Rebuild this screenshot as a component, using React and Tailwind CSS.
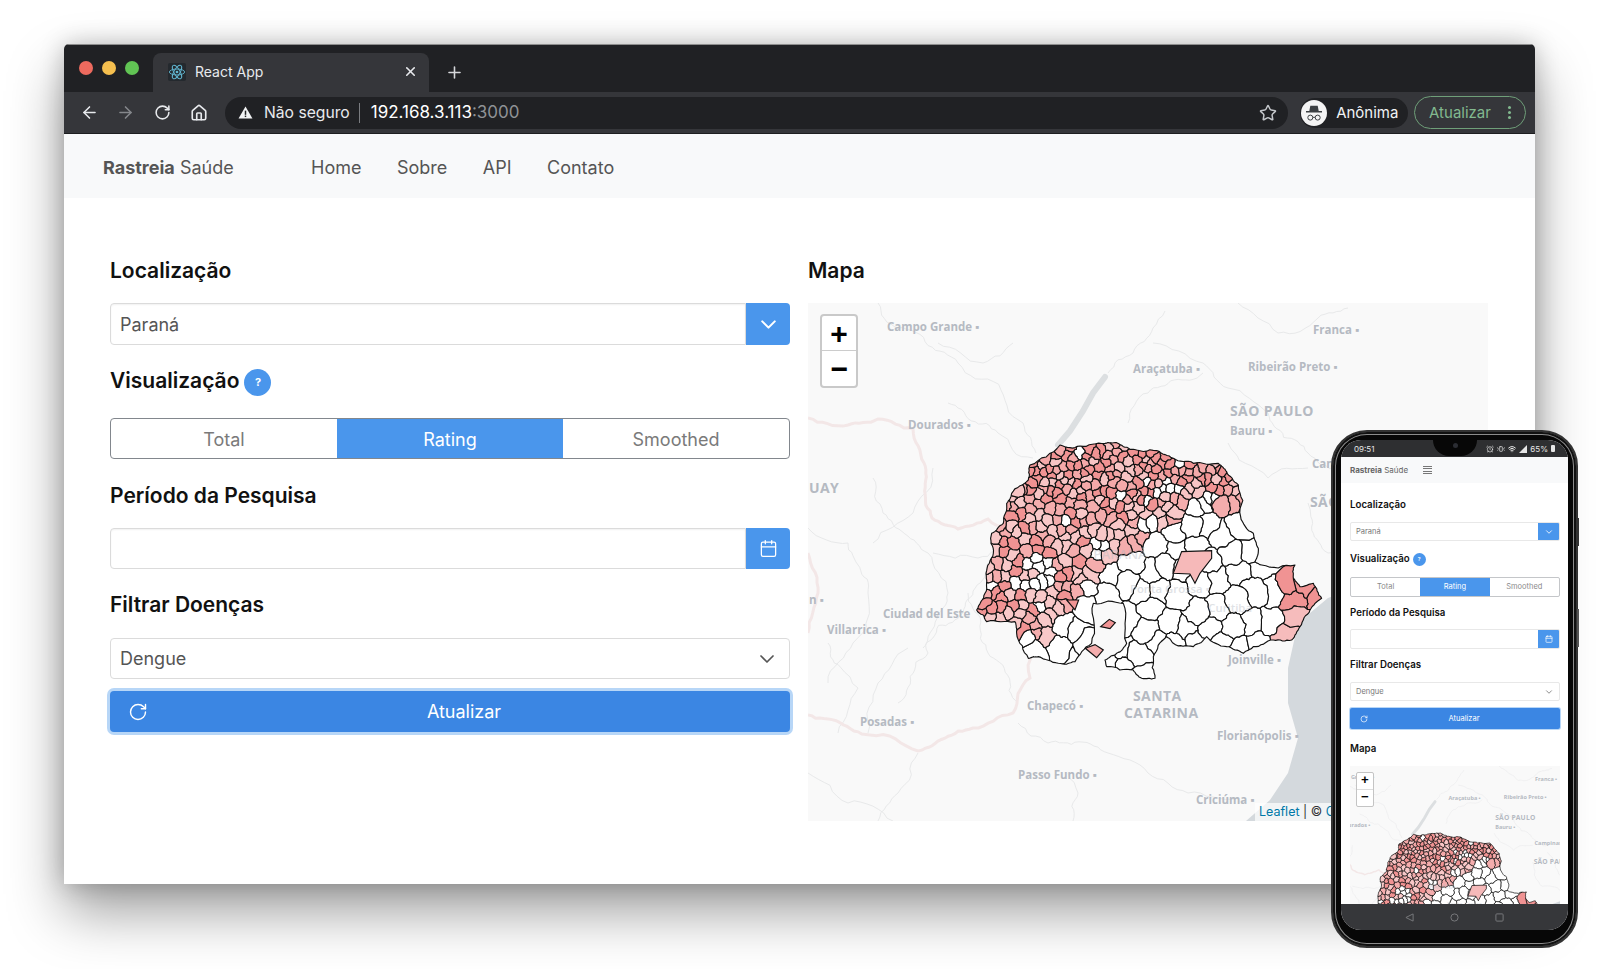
import React from 'react';
import { ArrowLeft, ArrowRight, RotateCw, Home, Star, X, Plus, ChevronDown, Calendar, AlarmClock, Vibrate, Wifi } from 'lucide-react';

// Outline of the state, in px of a 3x crop of the picture (the map group scales it down)
const OUTLINE = [
  [300,45],[360,48],[435,40],[470,38],[510,58],[590,62],[640,85],[700,100],[775,100],[800,125],[835,165],[842,260],
  [880,310],[895,355],[885,395],[905,405],[1005,405],[1000,445],[1020,470],[1060,460],[1085,505],[1050,540],[1020,590],
  [995,630],[940,630],[880,650],[850,670],[800,650],[740,620],[700,650],[640,640],[620,620],[580,680],[585,745],[545,745],
  [520,720],[440,710],[435,690],[470,670],[500,640],[490,520],[400,520],[395,640],[345,695],[295,700],[235,680],[205,685],
  [170,610],[165,575],[80,575],[50,540],[75,490],[78,430],[100,370],[95,310],[130,280],[140,220],[155,190],[205,150],[210,105],
];

const rand = (() => {
  let a = 20240611;
  return () => {
    a = (a + 0x6d2b79f5) | 0;
    let t = Math.imul(a ^ (a >>> 15), 1 | a);
    t = (t + Math.imul(t ^ (t >>> 7), 61 | t)) ^ t;
    return ((t ^ (t >>> 14)) >>> 0) / 4294967296;
  };
})();

const inside = (x, y) => {
  let hit = false;
  for (let i = 0, j = OUTLINE.length - 1; i < OUTLINE.length; j = i++) {
    const [xi, yi] = OUTLINE[i], [xj, yj] = OUTLINE[j];
    if ((yi > y) !== (yj > y) && x < ((xj - xi) * (y - yi)) / (yj - yi) + xi) hit = !hit;
  }
  return hit;
};

// Where the municipalities get pink (north and west)
const pinkLimit = (x) => {
  if (x < 250) return 620;
  if (x < 420) return 620 - ((x - 250) / 170) * 230;
  if (x < 560) return 390 - ((x - 420) / 140) * 70;
  if (x < 640) return 290;
  if (x < 860) return 215;
  return 0;
};

const spacing = (x, y) => {
  if (y < 220) return 15;
  if (y < pinkLimit(x)) return 19;
  return 44;
};

const seeds = [];
for (let i = 0; i < 4200; i++) {
  const x = 40 + rand() * 1060, y = 30 + rand() * 720;
  if (!inside(x, y)) continue;
  const r = spacing(x, y);
  if (seeds.every(s => Math.hypot(s[0] - x, (s[1] - y) * 0.8) > r)) seeds.push([x, y]);
}

const clipHalf = (poly, a, b) => {
  const mx = (a[0] + b[0]) / 2, my = (a[1] + b[1]) / 2, nx = b[0] - a[0], ny = b[1] - a[1];
  const side = p => (p[0] - mx) * nx + (p[1] - my) * ny;
  const out = [];
  poly.forEach((p, i) => {
    const q = poly[(i + 1) % poly.length], sp = side(p), sq = side(q);
    if (sp <= 0) out.push(p);
    if (sp < 0 !== sq < 0) {
      const t = sp / (sp - sq);
      out.push([p[0] + (q[0] - p[0]) * t, p[1] + (q[1] - p[1]) * t]);
    }
  });
  return out;
};

// Same bend for both cells sharing an edge, so borders look hand traced
const bend = (a, b, depth, amount = 0.4) => {
  if (depth === 0 || Math.hypot(a[0] - b[0], a[1] - b[1]) < 7) return [];
  const ka = `${Math.round(a[0])},${Math.round(a[1])}`, kb = `${Math.round(b[0])},${Math.round(b[1])}`;
  const key = ka < kb ? ka + kb : kb + ka;
  let h = 7;
  for (let i = 0; i < key.length; i++) h = (h * 31 + key.charCodeAt(i)) % 65521;
  const k = ((h / 65521) - 0.5) * amount * (ka < kb ? 1 : -1);
  const m = [(a[0] + b[0]) / 2 - (b[1] - a[1]) * k, (a[1] + b[1]) / 2 + (b[0] - a[0]) * k];
  return [...bend(a, m, depth - 1, amount), m, ...bend(m, b, depth - 1, amount)];
};

const toPath = (pts) => 'M' + pts.map(p => `${p[0].toFixed(1)} ${p[1].toFixed(1)}`).join('L') + 'Z';

const cellFill = (x, y, r) => {
  if (x > 915 && y > 395 && y < 450) return '#f09393';
  if (x > 950 && y > 455) return r < 0.5 ? '#f09393' : '#f6bcbc';
  if (y >= pinkLimit(x)) return '#ffffff';
  if (((x - 230) / 50) ** 2 + ((y - 450) / 80) ** 2 < 1 && r < 0.7) return '#ffffff';
  if (((x - 420) / 30) ** 2 + ((y - 345) / 30) ** 2 < 1) return '#ffffff';
  if (x > 540 && y > 150 && r < 0.3) return '#ffffff';
  if (r < 0.03) return '#ffffff';
  if (y < 200) return r < 0.5 ? '#f09393' : r < 0.78 ? '#f4a9a9' : '#f7c4c4';
  return r < 0.34 ? '#f09393' : r < 0.62 ? '#f4adad' : '#f8c8c8';
};

const cells = seeds.map((s) => {
  let poly = [[0, 0], [1110, 0], [1110, 780], [0, 780]];
  seeds.forEach((o) => {
    if (o !== s && Math.hypot(o[0] - s[0], o[1] - s[1]) < 240) poly = clipHalf(poly, s, o);
  });
  const wavy = [];
  poly.forEach((p, i) => wavy.push(p, ...bend(p, poly[(i + 1) % poly.length], 3)));
  return { d: toPath(wavy), fill: cellFill(s[0], s[1], rand()) };
});

const EXTRA = [
  { d: 'M640 430L665 365L755 362L755 385L720 430L705 460L690 432Z', fill: '#f6b9b9' },
  { d: 'M422 590L448 568L466 578L450 596Z', fill: '#f09393' },
  { d: 'M376 655L405 644L430 660L410 683Z', fill: '#f4adad' },
  { d: 'M320 510L356 510L345 540Z', fill: '#f09393' },
];

const outlineWavy = [];
OUTLINE.forEach((p, i) => outlineWavy.push(p, ...bend(p, OUTLINE[(i + 1) % OUTLINE.length], 3, 0.22)));
const outlinePath = toPath(outlineWavy);

const LABELS = [
  ['Campo Grande ▪', 79, 28], ['Araçatuba ▪', 325, 70], ['Ribeirão Preto ▪', 440, 68], ['Franca ▪', 505, 31],
  ['Bauru ▪', 422, 132], ['Dourados ▪', 100, 126], ['n ▪', 1, 301], ['Ciudad del Este', 75, 315], ['Villarrica ▪', 19, 331],
  ['Chapecó ▪', 219, 407], ['Posadas ▪', 52, 423], ['Florianópolis ▪', 409, 437], ['Passo Fundo ▪', 210, 476],
  ['Criciúma ▪', 388, 501], ['Joinville ▪', 420, 361], ['Campinas', 504, 165],
];

const BIG_LABELS = [['SÃO PAULO', 422, 113], ['UAY', 1, 190], ['SÃO PAULO', 502, 204], ['SANTA', 325, 398], ['CATARINA', 316, 415]];

const line = (pts, amount = 0.3) => {
  const out = [];
  pts.forEach((p, i) => {
    out.push(p);
    if (i < pts.length - 1) out.push(...bend(p, pts[i + 1], 4, amount));
  });
  return 'M' + out.map(p => `${p[0].toFixed(1)} ${p[1].toFixed(1)}`).join('L');
};

const GRAY_LINES = [
  [[300,70],[325,50],[345,25],[357,8]], [[70,0],[90,25],[150,60],[215,120],[228,150]], [[345,40],[395,60],[420,85],[460,110],[500,150],[530,165]],
  [[430,0],[450,15],[470,30],[510,15],[540,5]], [[0,225],[40,240],[60,290],[45,340],[20,380]], [[65,175],[75,210],[120,250],[140,290],[120,350],[90,400]],
  [[125,250],[170,255],[205,240],[260,265]], [[160,290],[180,350],[210,400]], [[60,430],[70,380],[100,345]], [[0,470],[40,500],[85,518]],
  [[210,420],[240,440],[300,450],[340,470],[380,490],[430,495]], [[110,450],[90,490],[70,518]], [[260,470],[270,490],[265,518]], [[530,180],[560,230],[600,240],[640,230]],
  [[500,200],[520,250],[560,260],[600,255]], [[140,100],[190,130],[225,155]], [[125,165],[105,210],[65,240]], [[180,260],[155,310],[115,345]],
  [[130,40],[175,60],[205,40]], [[20,340],[50,385],[30,430]], [[320,120],[340,90],[395,70]], [[420,140],[460,175],[500,165]],
].map(p => line(p));

const PINK_LINES = [
  [[0,115],[40,122],[70,116],[105,126],[116,160],[124,215],[150,226],[180,216],[215,240]],
  [[215,325],[222,375],[205,410],[165,425],[110,448],[62,432],[0,412]],
  [[0,250],[10,290],[0,330]],
].map(p => line(p, 0.2));

// Leaflet map, cut by viewBox: the phone shows the same drawing smaller
const MapCanvas = ({ id, viewBox, strokeWidth }) => (
  <svg viewBox={viewBox} preserveAspectRatio="xMinYMin slice" className="w-full h-full bg-[#f9f9f9]">
    <path d="M680 225L600 265L520 295L490 320L480 365L480 400L490 435L480 470L462 497L438 518L680 518Z" fill="#d4d9dd" />
    <path d="M250 142L262 128L275 108L285 90L297 74" fill="none" stroke="#dcdfe1" strokeWidth="6" strokeLinecap="round" />
    {GRAY_LINES.map((d, i) => <path key={i} d={d} fill="none" stroke="#e8e9ea" strokeWidth="1" />)}
    {PINK_LINES.map((d, i) => <path key={i} d={d} fill="none" stroke="#f3e7e7" strokeWidth="3" />)}
    <g fontFamily="'Open Sans', sans-serif" fontWeight="700" fill="#b5bac2">
      {LABELS.map(([t, x, y]) => <text key={t} x={x} y={y} fontSize="11.5">{t}</text>)}
      {BIG_LABELS.map(([t, x, y], i) => <text key={i} x={x} y={y} fontSize="14" letterSpacing="0.4">{t}</text>)}
    </g>
    <g transform="translate(152 127) scale(0.3333)">
      <clipPath id={id}><path d={outlinePath} /></clipPath>
      <g clipPath={`url(#${id})`} stroke="#111" strokeWidth={strokeWidth} strokeLinejoin="round">
        {cells.map((c, i) => <path key={i} d={c.d} fill={c.fill} />)}
      </g>
      <path d={outlinePath} fill="none" stroke="#111" strokeWidth={strokeWidth} strokeLinejoin="round" />
      {EXTRA.map((c, i) => <path key={i} d={c.d} fill={c.fill} stroke="#111" strokeWidth={strokeWidth} />)}
      <g fontFamily="'Open Sans', sans-serif" fontWeight="600" fill="#b2b7bf" opacity="0.4">
        <text x="400" y="388" fontSize="40">PARANÁ</text>
        <text x="510" y="490" fontSize="34">Ponta Grossa ▪</text>
        <text x="745" y="546" fontSize="34">Curitiba</text>
      </g>
    </g>
  </svg>
);

const ReactLogo = () => (
  <svg viewBox="0 0 20 20" className="w-[18px] h-[18px]" fill="none" stroke="#61b5cf" strokeWidth="1">
    <rect width="20" height="20" rx="2" fill="#24292e" stroke="none" />
    <ellipse cx="10" cy="10" rx="8.5" ry="3.3" />
    <ellipse cx="10" cy="10" rx="8.5" ry="3.3" transform="rotate(60 10 10)" />
    <ellipse cx="10" cy="10" rx="8.5" ry="3.3" transform="rotate(120 10 10)" />
    <circle cx="10" cy="10" r="1.5" fill="#61b5cf" stroke="none" />
  </svg>
);

const Incognito = () => (
  <svg viewBox="0 0 26 26" className="w-[26px] h-[26px]">
    <circle cx="13" cy="13" r="13" fill="#f4f4f4" />
    <path d="M9.3 5.8h7.4l1 5.2H21v1.4H5V11h3.3z" fill="#3c4043" />
    <g fill="none" stroke="#3c4043" strokeWidth="1">
      <circle cx="9.3" cy="17.6" r="2.5" />
      <circle cx="16.7" cy="17.6" r="2.5" />
      <path d="M11.8 17.3h2.4" />
    </g>
  </svg>
);

const Warning = () => (
  <svg viewBox="0 0 16 14" className="w-[15px] h-[13px]">
    <path d="M8 0.5L15.5 13.5H0.5Z" fill="#f1f3f4" />
    <rect x="7.2" y="5" width="1.6" height="4.5" fill="#202124" />
    <rect x="7.2" y="10.3" width="1.6" height="1.6" fill="#202124" />
  </svg>
);

const BrowserBar = () => (
  <div className="font-['Inter',sans-serif]">
    <div className="h-[48px] bg-[#202124] flex items-end border-t border-[#8d8d8d]">
      <div className="flex gap-[9px] pl-[15px] w-[89px] self-center -mt-[1px]">
        <span className="w-[14px] h-[14px] rounded-full bg-[#ed6a5e]" />
        <span className="w-[14px] h-[14px] rounded-full bg-[#f5bf4f]" />
        <span className="w-[14px] h-[14px] rounded-full bg-[#61c454]" />
      </div>
      <div className="w-[276px] h-[39px] bg-[#35363a] rounded-t-lg flex items-center pl-[15px] pr-[11px] pb-[2px] text-[14px] text-[#e8eaed]">
        <ReactLogo />
        <span className="ml-[9px] flex-1">React App</span>
        <X size={15} strokeWidth={2.5} />
      </div>
      <Plus size={19} strokeWidth={2} className="text-[#d5d7da] ml-[16px] mb-[10px]" />
    </div>
    <div className="h-[42px] bg-[#35363a] flex items-center pl-[16px] pr-[9px] border-b border-[#1d1e20]">
      <ArrowLeft size={19} className="text-[#e8eaed]" />
      <ArrowRight size={19} className="text-[#85878b] ml-[17px]" />
      <RotateCw size={17} strokeWidth={2.2} className="text-[#e8eaed] ml-[19px]" />
      <Home size={18} strokeWidth={2.2} className="text-[#e8eaed] ml-[19px]" />
      <div className="ml-[17px] w-[1064px] h-[32px] rounded-full bg-[#202124] flex items-center pl-[13px] pr-[11px] text-[15.7px] text-[#e8eaed]">
        <Warning />
        <span className="ml-[11px]">Não seguro</span>
        <span className="ml-[9px] mr-[11px] w-px h-[20px] bg-[#7a7c80]" />
        <span className="text-white text-[17px]">192.168.3.113</span>
        <span className="text-[#8f9296] text-[17px]">:3000</span>
        <Star size={18} className="ml-auto text-[#c4c7cb]" />
      </div>
      <div className="ml-[12px] w-[108px] h-[30px] rounded-full bg-[#202124] flex items-center pl-[1px] text-[15px] text-[#f1f3f4]">
        <Incognito />
        <span className="ml-[9px] mt-[2px]">Anônima</span>
      </div>
      <div className="ml-[6px] w-[112px] h-[33px] rounded-full border border-[#6f9f79] flex items-center pl-[14px] text-[15px] text-[#82b98f]">
        <span className="mt-[1px]">Atualizar</span>
        <span className="ml-[17px] flex flex-col gap-[2px]">
          <i className="w-[3px] h-[3px] rounded-full bg-[#82b98f]" />
          <i className="w-[3px] h-[3px] rounded-full bg-[#82b98f]" />
          <i className="w-[3px] h-[3px] rounded-full bg-[#82b98f]" />
        </span>
      </div>
    </div>
  </div>
);

const Heading = ({ children, className = '' }) => (
  <h2 className={`h-[28px] leading-[30px] text-[21px] font-semibold text-[#111] ${className}`}>{children}</h2>
);

const DesktopPage = () => (
  <div className="flex-1 bg-white">
    <nav className="h-[64px] bg-[#f8f9fa] flex items-center pl-[39px] pt-[2px] text-[18px] text-[#555]">
      <span className="w-[208px]"><b className="font-bold">Rastreia</b> Saúde</span>
      <div className="flex gap-[35.5px]">
        <span>Home</span>
        <span>Sobre</span>
        <span>API</span>
        <span>Contato</span>
      </div>
    </nav>
    <div className="grid grid-cols-[680px_680px] gap-[18px] px-[46px] pt-[58px]">
      <div>
        <Heading>Localização</Heading>
        <div className="mt-[19px] h-[42px] flex">
          <div className="flex-1 border border-[#dbdbdb] rounded-l flex items-center pl-[9px] text-[18px] text-[#555] shadow-[inset_0_1px_2px_rgba(0,0,0,0.06)]">Paraná</div>
          <div className="w-[44px] bg-[#4a96ec] rounded-r flex items-center justify-center text-white"><ChevronDown size={25} strokeWidth={2} /></div>
        </div>
        <div className="mt-[21px] flex items-start gap-[5px]">
          <Heading>Visualização</Heading>
          <span className="w-[27px] h-[27px] mt-[3px] rounded-full bg-[#4a96ec] text-white text-[11px] font-bold flex items-center justify-center">?</span>
        </div>
        <div className="mt-[22px] h-[41px] grid grid-cols-3 border border-[#82878d] rounded text-[18px] text-center leading-[41px] text-[#7a7a7a] overflow-hidden">
          <span>Total</span>
          <span className="bg-[#4a96ec] text-white">Rating</span>
          <span>Smoothed</span>
        </div>
        <Heading className="mt-[22px]">Período da Pesquisa</Heading>
        <div className="mt-[19px] h-[41px] flex">
          <div className="flex-1 border border-[#dbdbdb] rounded-l shadow-[inset_0_1px_2px_rgba(0,0,0,0.06)]" />
          <div className="w-[44px] bg-[#4a96ec] rounded-r flex items-center justify-center text-white"><Calendar size={19} strokeWidth={1.6} /></div>
        </div>
        <Heading className="mt-[21px]">Filtrar Doenças</Heading>
        <div className="mt-[20px] h-[41px] border border-[#dbdbdb] rounded flex items-center justify-between pl-[9px] pr-[10px] text-[18px] text-[#555]">
          <span>Dengue</span>
          <ChevronDown size={24} strokeWidth={1.7} className="text-[#555]" />
        </div>
        <button className="mt-[12px] w-full h-[41px] bg-[#3b86e3] rounded text-white text-[18px] flex items-center pl-[18px] pr-[10px] shadow-[0_0_0_3px_#b7d6f7]">
          <RotateCw size={20} strokeWidth={1.7} />
          <span className="flex-1 text-center">Atualizar</span>
        </button>
      </div>
      <div>
        <Heading>Mapa</Heading>
        <div className="relative mt-[19px] h-[518px] overflow-hidden">
          <MapCanvas id="state-main" viewBox="0 0 680 518" strokeWidth={3.4} />
          <div className="absolute left-[12px] top-[11px] w-[38px] h-[74px] border-2 border-[#c9c9c9] rounded bg-white flex flex-col text-black font-['Liberation_Mono',monospace] font-bold text-[30px] leading-[40px] text-center">
            <span className="h-[35px] border-b border-[#ccc]">+</span>
            <span className="h-[35px]">−</span>
          </div>
          <div className="absolute right-0 bottom-0 w-[233px] pl-[4px] h-[18px] leading-[18px] bg-white/70 text-[12.5px] text-[#333] whitespace-nowrap overflow-hidden">
            <span className="text-[#0078a8]">Leaflet</span> | © <span className="text-[#0078a8]">OpenStreetMap</span>
          </div>
        </div>
      </div>
    </div>
  </div>
);

const PhoneHeading = ({ children, className = '' }) => (
  <h3 className={`h-[12px] leading-[12px] text-[9.7px] font-semibold text-[#111] ${className}`}>{children}</h3>
);

const PhoneField = ({ children, className = '' }) => (
  <div className={`h-[20px] flex border border-[#e8e8e8] rounded-[2px] overflow-hidden text-[7.5px] text-[#777] ${className}`}>{children}</div>
);

const PhoneFrame = () => (
  <div className="absolute left-[1331px] top-[430px] w-[247px] h-[518px] rounded-[36px] bg-[#070707] border-2 border-[#333] pt-[8px] pb-[16px] px-[8px] shadow-[inset_0_0_0_2px_#111,inset_0_0_0_3px_#8c8c8c] font-['Inter',sans-serif]">
    <span className="absolute -right-[3px] top-[86px] w-[2px] h-[28px] bg-[#333]" />
    <span className="absolute -right-[3px] top-[177px] w-[2px] h-[38px] bg-[#555]" />
    <div className="relative h-full rounded-[20px] overflow-hidden bg-white flex flex-col">
      <div className="h-[17px] shrink-0 bg-[#2e2f31] flex items-center px-[13px] text-[8px] text-[#e6e6e6]">
        <span>09:51</span>
        <span className="ml-auto flex items-center gap-[3px]">
          <AlarmClock size={8} />
          <Vibrate size={8} />
          <Wifi size={8} strokeWidth={3} />
          <svg viewBox="0 0 8 8" className="w-[8px] h-[8px]"><path d="M8 0V8H0Z" fill="#e6e6e6" /></svg>
          <span>65%</span>
          <span className="w-[4px] h-[7px] bg-[#e6e6e6] rounded-[1px]" />
        </span>
      </div>
      <div className="absolute left-[92px] top-0 w-[44px] h-[16px] bg-[#070707] rounded-b-[22px] flex justify-center pt-[3px]">
        <span className="w-[5px] h-[5px] rounded-full bg-[#2b2d33]" />
      </div>
      <div className="h-[26px] shrink-0 bg-[#f8f9fa] flex items-center pl-[9px] text-[8px] text-[#666]">
        <span><b className="font-bold">Rastreia</b> Saúde</span>
        <span className="ml-[15px] flex flex-col gap-[1.5px]">
          <i className="w-[9px] h-px bg-[#777]" />
          <i className="w-[9px] h-px bg-[#777]" />
          <i className="w-[9px] h-px bg-[#777]" />
          <i className="w-[9px] h-px bg-[#777]" />
        </span>
      </div>
      <div className="flex-1 min-h-0 overflow-hidden pl-[9px] pr-[8px]">
        <PhoneHeading className="mt-[16px]">Localização</PhoneHeading>
        <PhoneField className="mt-[11px] !h-[19px]">
          <span className="flex-1 pl-[5px] leading-[17px]">Paraná</span>
          <span className="w-[21px] bg-[#4a96ec] text-white flex items-center justify-center"><ChevronDown size={10} /></span>
        </PhoneField>
        <div className="mt-[10px] flex items-center gap-[3px]">
          <PhoneHeading>Visualização</PhoneHeading>
          <span className="w-[13px] h-[13px] mt-[2px] rounded-full bg-[#4a96ec] text-white text-[5px] font-bold flex items-center justify-center">?</span>
        </div>
        <div className="mt-[11px] h-[20px] grid grid-cols-3 border border-[#c4c6c9] rounded-[2px] overflow-hidden text-center text-[7.5px] leading-[18px] text-[#8a8a8a]">
          <span>Total</span>
          <span className="bg-[#4a96ec] text-white">Rating</span>
          <span>Smoothed</span>
        </div>
        <PhoneHeading className="mt-[10px]">Período da Pesquisa</PhoneHeading>
        <PhoneField className="mt-[10px]">
          <span className="flex-1" />
          <span className="w-[21px] bg-[#4a96ec] text-white flex items-center justify-center"><Calendar size={8} /></span>
        </PhoneField>
        <PhoneHeading className="mt-[10px]">Filtrar Doenças</PhoneHeading>
        <PhoneField className="mt-[11px] !h-[19px] items-center justify-between px-[5px]">
          <span>Dengue</span>
          <ChevronDown size={10} />
        </PhoneField>
        <div className="mt-[7px] h-[21px] rounded-[2px] bg-[#3b86e3] text-white text-[7.5px] flex items-center pl-[10px] shadow-[0_0_0_1px_#b7d6f7]">
          <RotateCw size={8} />
          <span className="flex-1 text-center">Atualizar</span>
        </div>
        <PhoneHeading className="mt-[14px]">Mapa</PhoneHeading>
        <div className="relative mt-[11px] h-[150px] overflow-hidden">
          <MapCanvas id="state-phone" viewBox="120 0 440 312" strokeWidth={4.6} />
          <div className="absolute left-[6px] top-[6px] w-[18px] h-[35px] border border-[#c4c4c4] rounded-[2px] bg-white flex flex-col text-black text-center font-['Liberation_Mono',monospace] font-bold text-[13px] leading-[16px]">
            <span className="h-[17px] border-b border-[#ddd]">+</span>
            <span className="h-[16px]">−</span>
          </div>
        </div>
      </div>
      <div className="absolute left-0 right-0 bottom-0 h-[26px] bg-[#36373a] flex items-center justify-center gap-[36px]">
        <svg viewBox="0 0 10 10" className="w-[9px] h-[9px]" fill="none" stroke="#77787b" strokeWidth="1.1"><path d="M9 1V9L1 5Z" /></svg>
        <svg viewBox="0 0 10 10" className="w-[9px] h-[9px]" fill="none" stroke="#77787b" strokeWidth="1.1"><circle cx="5" cy="5" r="4" /></svg>
        <svg viewBox="0 0 10 10" className="w-[9px] h-[9px]" fill="none" stroke="#77787b" strokeWidth="1.1"><rect x="1" y="1" width="8" height="8" rx="1" /></svg>
      </div>
    </div>
  </div>
);

const App = () => (
  <div className="relative w-[1600px] h-[969px] overflow-hidden bg-white pl-[64px] pt-[44px] font-['Inter',sans-serif]">
    <div className="w-[1471px] h-[840px] flex flex-col rounded-t-[5px] overflow-hidden shadow-[0_28px_55px_rgba(0,0,0,0.38),0_0_24px_rgba(0,0,0,0.22)]">
      <BrowserBar />
      <DesktopPage />
    </div>
    <PhoneFrame />
  </div>
);

export default App;
